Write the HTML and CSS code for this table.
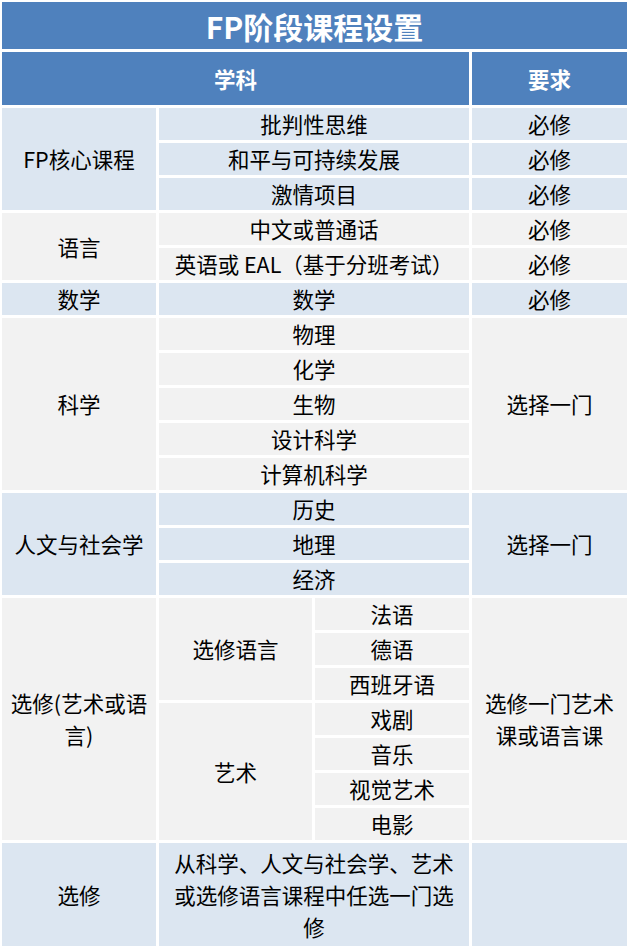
FILE: index.html
```html
<!DOCTYPE html>
<html lang="zh-CN">
<head>
<meta charset="utf-8">
<title>FP阶段课程设置</title>
<link rel="stylesheet" href="styles.css">
</head>
<body>
<table class="course">
  <colgroup>
    <col class="c1"><col class="c2a"><col class="c2b"><col class="c3">
  </colgroup>
  <tr><td class="title" colspan="4">FP阶段课程设置</td></tr>
  <tr class="head"><th colspan="3">学科</th><th>要求</th></tr>

  <tr class="blue"><td rowspan="3">FP核心课程</td><td colspan="2">批判性思维</td><td>必修</td></tr>
  <tr class="blue"><td colspan="2">和平与可持续发展</td><td>必修</td></tr>
  <tr class="blue"><td colspan="2">激情项目</td><td>必修</td></tr>

  <tr class="gray"><td rowspan="2">语言</td><td colspan="2">中文或普通话</td><td>必修</td></tr>
  <tr class="gray"><td colspan="2">英语或 EAL（基于分班考试）</td><td>必修</td></tr>

  <tr class="blue"><td>数学</td><td colspan="2">数学</td><td>必修</td></tr>

  <tr class="gray"><td rowspan="5">科学</td><td colspan="2">物理</td><td rowspan="5">选择一门</td></tr>
  <tr class="gray"><td colspan="2">化学</td></tr>
  <tr class="gray"><td colspan="2">生物</td></tr>
  <tr class="gray"><td colspan="2">设计科学</td></tr>
  <tr class="gray"><td colspan="2">计算机科学</td></tr>

  <tr class="blue"><td rowspan="3">人文与社会学</td><td colspan="2">历史</td><td rowspan="3">选择一门</td></tr>
  <tr class="blue"><td colspan="2">地理</td></tr>
  <tr class="blue"><td colspan="2">经济</td></tr>

  <tr class="gray"><td rowspan="7">选修(艺术或语言)</td><td rowspan="3">选修语言</td><td>法语</td><td rowspan="7">选修一门艺术课或语言课</td></tr>
  <tr class="gray"><td>德语</td></tr>
  <tr class="gray"><td>西班牙语</td></tr>
  <tr class="gray"><td rowspan="4">艺术</td><td>戏剧</td></tr>
  <tr class="gray"><td>音乐</td></tr>
  <tr class="gray"><td>视觉艺术</td></tr>
  <tr class="gray"><td>电影</td></tr>

  <tr class="blue last"><td>选修</td><td colspan="2">从科学、人文与社会学、艺术或选修语言课程中任选一门选修</td><td></td></tr>
</table>
</body>
</html>
```
FILE: styles.css
```css
html, body {
  margin: 0;
  padding: 0;
  background: #ffffff;
}

.course {
  width: 631px;
  margin: -1px 0 0 -1px;
  table-layout: fixed;
  border-collapse: separate;
  border-spacing: 3px;
  font-family: "Noto Sans CJK SC", "Noto Sans", sans-serif;
  font-size: 21.5px;
  line-height: 32px;
  color: #000000;
}

.c1 { width: 154px; }
.c2a { width: 153px; }
.c2b { width: 154px; }
.c3 { width: 155px; }

.course td,
.course th {
  padding: 0 6px;
  height: 32px;
  text-align: center;
  vertical-align: middle;
  font-weight: 400;
}

.course .title {
  height: 47px;
  background: #4f81bd;
  color: #ffffff;
  font-size: 30px;
  font-weight: 700;
}

.head th {
  height: 53px;
  background: #4f81bd;
  color: #ffffff;
  font-weight: 700;
}

.blue td { background: #dce6f1; }
.gray td { background: #f2f2f2; }

.last td {
  height: 103px;
  padding: 0 8px;
}
```
